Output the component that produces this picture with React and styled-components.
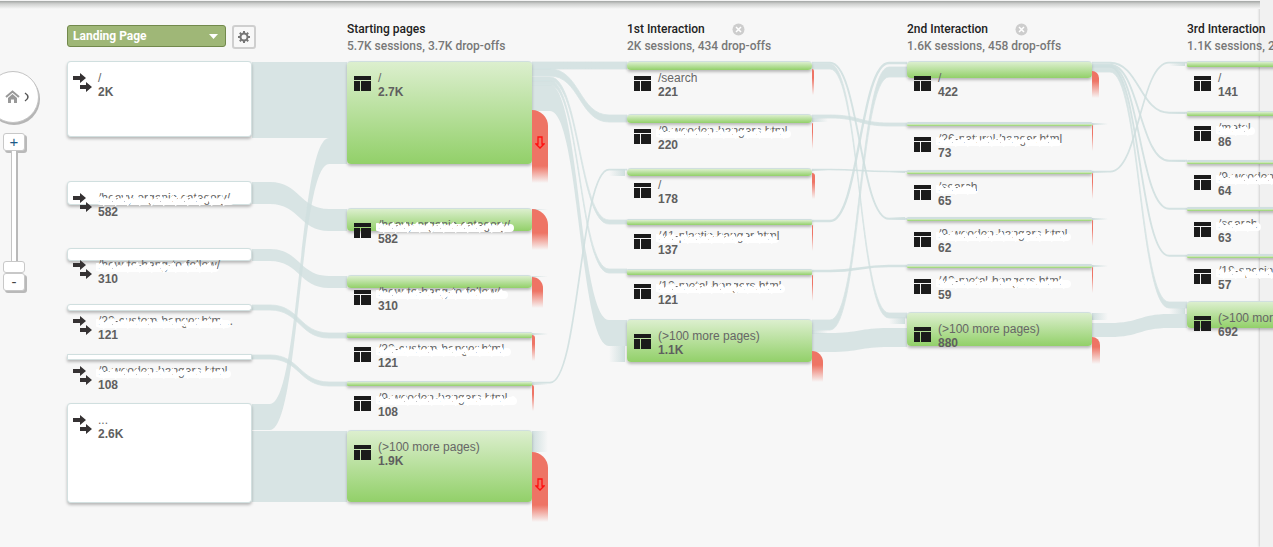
import React from "react";
import styled, { createGlobalStyle } from "styled-components";

const GlobalStyle = createGlobalStyle`
  * {
    box-sizing: border-box;
  }
  body {
    margin: 0;
    background-color: #f7f7f7;
    font-family: Roboto, "Liberation Sans", sans-serif;
    font-size: 12px;
  }
`;

const Page = styled.div`
  position: relative;
  display: flex;
  min-height: 100vh;
  overflow: hidden;
  background-color: #f7f7f7;
`;
const TopShadow = styled.div`
  position: absolute;
  top: 0;
  left: 0;
  right: 13px;
  height: 9px;
  border-top: 1px solid #f4f4f4;
  background: linear-gradient(#a2a5a3, #cfd0cf 35%, #f7f7f7);
`;
const Gutter = styled.div`
  width: 13px;
  background-color: #f1f1f1;
  box-shadow: -1px 0 2px #d0d0d0;
`;

const Rail = styled.div`
  width: 67px;
  padding-top: 71px;
  display: flex;
  flex-direction: column;
  align-items: flex-start;
`;
const HomeButton = styled.button`
  display: flex;
  align-items: center;
  justify-content: flex-end;
  gap: 4px;
  width: 52px;
  height: 52px;
  margin-left: -13px;
  padding: 0 8px 0 0;
  border: 1px solid #c4c4c4;
  border-radius: 50%;
  background-color: white;
  box-shadow: 1px 2px 0 #b5b5b5;
`;
const Zoom = styled.div`
  display: flex;
  flex-direction: column;
  align-items: center;
  width: 22px;
  margin: 10px 0 0 3px;
`;
const ZoomButton = styled.button`
  display: flex;
  align-items: center;
  justify-content: center;
  width: 22px;
  height: 18px;
  padding: 0;
  border: 1px solid #c8c8c8;
  border-radius: 3px;
  background-color: white;
  box-shadow: 2px 2px 0 #b9b9b9;
  color: ${(props) => props.color};
  font-family: "Liberation Sans", Arial, sans-serif;
  font-size: 15px;
  line-height: 16px;
`;
const ZoomRange = styled.input`
  appearance: none;
  writing-mode: vertical-lr;
  direction: rtl;
  width: 22px;
  height: 122px;
  margin: 0;
  background: linear-gradient(
      90deg,
      #c4c4c4 1px,
      white 1px,
      white 5px,
      #b9b9b9 5px
    )
    center / 7px 100% no-repeat;

  &::-webkit-slider-thumb {
    appearance: none;
    width: 22px;
    height: 12px;
    border: 1px solid #c8c8c8;
    border-radius: 3px;
    background-color: white;
  }
`;

const Board = styled.main`
  position: relative;
  z-index: 1;
  flex: 1;
  min-width: 0;
  padding-top: 21px;
`;
const Columns = styled.div`
  display: flex;
  gap: 95px;
`;
const Column = styled.section`
  flex: 0 0 185px;
  min-width: 0;
`;
const Head = styled.header`
  height: 40px;
  white-space: nowrap;
  line-height: 17px;
`;
const TitleRow = styled.div`
  display: flex;
  align-items: center;
  gap: 27px;
`;
const Title = styled.h2`
  margin: 0;
  color: #222;
  font-size: 12px;
  font-weight: 500;
`;
const Sub = styled.p`
  margin: 0;
  color: #777;
  font-weight: 500;
`;
const CloseButton = styled.button`
  display: flex;
  padding: 0;
  border: none;
  background: none;
`;
const Tools = styled.div`
  display: flex;
  align-items: flex-start;
  gap: 6px;
  padding-top: 4px;
`;
const SelectBox = styled.label`
  flex: none;
  display: grid;
  align-items: center;
  width: 159px;

  > * {
    grid-area: 1 / 1;
  }
  svg {
    justify-self: end;
    margin-right: 8px;
    pointer-events: none;
  }
`;
const Select = styled.select`
  appearance: none;
  width: 100%;
  height: 22px;
  padding: 0 5px;
  border: 1px solid #72894c;
  border-radius: 3px;
  background-color: #9fb777;
  color: white;
  font-family: inherit;
  font-size: 12px;
  font-weight: 700;
`;
const GearButton = styled.button`
  flex: none;
  display: flex;
  align-items: center;
  justify-content: center;
  width: 24px;
  height: 24px;
  padding: 0;
  border: 2px solid #cfcfcf;
  border-radius: 3px;
  background-color: #f8f8f8;
`;

const Nodes = styled.div`
  position: relative;
`;
const Node = styled.article`
  position: absolute;
  top: ${(props) => props.$top}px;
  left: 0;
  width: 185px;
`;
const Bar = styled.div`
  height: ${(props) => props.$size}px;
  border: ${(props) => (props.$plain ? "1px solid #d3e0e0" : "none")};
  border-top: ${(props) => (props.$size === 4 ? 2 : 1)}px solid #d0dfdf;
  border-radius: ${(props) => (props.$size < 7 ? 1 : 4)}px;
  background: ${(props) =>
    props.$plain ? "white" : "linear-gradient(#dcefce, #92d069)"};
  box-shadow: 0 2px 3px rgba(0, 0, 0, 0.25);
`;
const Caption = styled.div`
  position: absolute;
  top: 10px;
  left: 6px;
  display: flex;
  gap: 6px;
  color: #666;
  font-family: "Liberation Sans", Arial, sans-serif;
  line-height: 14px;
  white-space: nowrap;

  > svg {
    flex: none;
    margin-top: 2px;
  }
`;
const Count = styled.strong`
  display: block;
  color: #5f5f5f;
`;
const Masked = styled.span`
  position: relative;
  display: block;
  width: ${(props) => props.$width}px;

  svg {
    position: absolute;
    top: 1px;
    left: -2px;
  }
  span {
    position: relative;
  }
`;
const DropOff = styled.div`
  position: absolute;
  top: ${(props) => props.$top}px;
  left: 185px;
  display: flex;
  justify-content: center;
  width: ${(props) => props.$width}px;
  height: ${(props) => props.$height}px;
  padding-top: 26px;
  border-top-right-radius: ${(props) => props.$width}px;
  background: linear-gradient(
    #ee7465 calc(100% - 17px),
    rgba(238, 116, 101, 0)
  );
`;
const Flow = styled.svg`
  position: absolute;
  top: 0;
  left: 0;
`;

// tops and sizes are measured from the top edge of the board
const columns = [
  {
    plain: true,
    nodes: [
      { top: 61, size: 76, label: "/", count: "2K" },
      { top: 181, size: 24, label: "/heavy-organic-category/", count: "582", mask: 136 },
      { top: 248, size: 13, label: "/how-to-hang-to-follow/", count: "310", mask: 120 },
      { top: 304, size: 7, label: "/22-custom-hanger.htm…", count: "121", mask: 134 },
      { top: 354, size: 6, label: "/9-wooden-hangers.html", count: "108", mask: 134 },
      { top: 403, size: 100, label: "...", count: "2.6K" },
    ],
  },
  {
    title: "Starting pages",
    sub: "5.7K sessions, 3.7K drop-offs",
    nodes: [
      { top: 61, size: 103, label: "/", count: "2.7K", drop: [110, 73, 16, true] },
      { top: 208, size: 23, label: "/heavy-organic-category/", count: "582", mask: 136, drop: [209, 41, 16] },
      { top: 275, size: 13, label: "/how-to-hang-to-follow/", count: "310", mask: 130, drop: [277, 31, 11] },
      { top: 332, size: 6, label: "/22-custom-hanger.html", count: "121", mask: 134, drop: [335, 23, 3] },
      { top: 381, size: 5, label: "/9-wooden-hangers.html", count: "108", mask: 140, drop: [385, 21, 2] },
      { top: 430, size: 72, label: "(>100 more pages)", count: "1.9K", drop: [452, 70, 16, true] },
    ],
  },
  {
    title: "1st Interaction",
    sub: "2K sessions, 434 drop-offs",
    closable: true,
    nodes: [
      { top: 61, size: 9, label: "/search", count: "221", drop: [69, 22, 2] },
      { top: 114, size: 9, label: "/9-wooden-hangers.html", count: "220", mask: 134, drop: [123, 21, 1] },
      { top: 168, size: 8, label: "/", count: "178", drop: [173, 22, 3] },
      { top: 219, size: 6, label: "/41-plastic-hanger.html", count: "137", mask: 122, drop: [225, 21, 1] },
      { top: 269, size: 6, label: "/12-metal-hangers.html", count: "121", mask: 128, drop: [275, 21, 1] },
      { top: 319, size: 43, label: "(>100 more pages)", count: "1.1K", drop: [351, 31, 11] },
    ],
  },
  {
    title: "2nd Interaction",
    sub: "1.6K sessions, 458 drop-offs",
    closable: true,
    nodes: [
      { top: 61, size: 17, label: "/", count: "422", drop: [71, 27, 7] },
      { top: 122, size: 4, label: "/26-natural-hanger.html", count: "73", mask: 124, drop: [125, 21, 1] },
      { top: 170, size: 4, label: "/search", count: "65", mask: 40, drop: [173, 21, 1] },
      { top: 217, size: 4, label: "/9-wooden-hangers.html", count: "62", mask: 132, drop: [220, 21, 1] },
      { top: 264, size: 4, label: "/42-metal-hangers.html", count: "59", mask: 132, drop: [267, 21, 1] },
      { top: 312, size: 34, label: "(>100 more pages)", count: "880", drop: [337, 27, 8] },
    ],
  },
  {
    title: "3rd Interaction",
    sub: "1.1K sessions, 267 drop-offs",
    closable: true,
    nodes: [
      { top: 61, size: 6, label: "/", count: "141" },
      { top: 111, size: 5, label: "/metal", count: "86", mask: 36 },
      { top: 160, size: 4, label: "/9-wooden-hangers", count: "64", mask: 110 },
      { top: 207, size: 4, label: "/search", count: "63", mask: 42 },
      { top: 254, size: 4, label: "/18-special-hangers", count: "57", mask: 110 },
      { top: 301, size: 27, label: "(>100 more pages)", count: "692" },
    ],
  },
];

// column, y at the left end, y at the right end, thickness
const links = [
  [0, 62, 62, 76],
  [0, 182, 209, 22],
  [0, 249, 276, 12],
  [0, 305, 333, 5],
  [0, 355, 382, 4],
  [0, 404, 138, 26],
  [0, 431, 431, 71],
  [1, 62, 62, 7],
  [1, 69, 115, 7],
  [1, 77, 220, 4],
  [1, 81, 269, 4],
  [1, 85, 320, 26],
  [1, 382, 169, 1.4],
  [2, 62, 218, 1.6],
  [2, 64, 313, 5],
  [2, 115, 123, 3],
  [2, 169, 171, 1],
  [2, 220, 62, 2],
  [2, 270, 265, 2],
  [2, 320, 67, 10],
  [2, 333, 328, 19],
  [3, 62, 112, 1.5],
  [3, 64, 160, 1.5],
  [3, 65, 208, 1.5],
  [3, 66, 255, 1.5],
  [3, 66, 302, 6],
  [3, 171, 62, 1.4],
  [3, 323, 314, 14],
];

// traffic that fades out beside a node: x, y, height, side
const stubs = [
  [465, 431, 21, "out"],
  [465, 209, 1, "out"],
  [465, 276, 1, "out"],
  [465, 333, 2, "out"],
  [465, 383, 2, "out"],
  [542, 169, 7, "in"],
  [542, 346, 16, "in"],
  [745, 118, 4, "out"],
  [745, 169, 2, "out"],
  [745, 330, 4, "out"],
  [822, 171, 2, "in"],
  [822, 217, 3, "in"],
  [822, 317, 7, "in"],
  [1025, 123, 2, "out"],
  [1025, 171, 2, "out"],
  [1025, 218, 2, "out"],
  [1025, 265, 2, "out"],
  [1025, 313, 7, "out"],
  [1102, 62, 4, "in"],
  [1102, 112, 2, "in"],
  [1102, 160, 2, "in"],
  [1102, 308, 6, "in"],
];

const ribbon = ([col, from, to, size]) => {
  const x = 185 + col * 280;
  const a = x + 18;
  const b = x + 77;
  const mid = (a + b) / 2;
  return `M${x} ${from}H${a}C${mid} ${from} ${mid} ${to} ${b} ${to}H${x + 95}V${
    to + size
  }H${b}C${mid} ${to + size} ${mid} ${from + size} ${a} ${from + size}H${x}Z`;
};

// a ribbon of one or two pixels would vanish where it runs steeply
const thread = ([col, from, to, size]) => {
  const x = 185 + col * 280;
  const y = from + size / 2;
  const end = to + size / 2;
  return `M${x} ${y}H${x + 18}C${x + 47} ${y} ${x + 48} ${end} ${
    x + 77
  } ${end}H${x + 95}`;
};

const Links = () => (
  <Flow width="1206" height="547" aria-hidden="true">
    <defs>
      <linearGradient id="out">
        <stop offset="0" stopColor="#d0dfdf" />
        <stop offset="1" stopColor="#d0dfdf" stopOpacity="0" />
      </linearGradient>
      <linearGradient id="in">
        <stop offset="0" stopColor="#d0dfdf" stopOpacity="0" />
        <stop offset="1" stopColor="#d0dfdf" />
      </linearGradient>
    </defs>
    {links.map((link, i) =>
      link[3] > 2 ? (
        <path
          key={i}
          d={ribbon(link)}
          fill="#cfdfdf"
          stroke="#cfdfdf"
          strokeWidth={link[3] < 11 ? 0.8 : 0}
          opacity="0.8"
        />
      ) : (
        <path
          key={i}
          d={thread(link)}
          fill="none"
          stroke="#cfdfdf"
          strokeWidth={link[3] + 0.3}
          opacity="0.9"
        />
      )
    )}
    {stubs.map(([x, y, height, side], i) => (
      <rect key={i} x={x} y={y} width="16" height={height} fill={`url(#${side})`} />
    ))}
  </Flow>
);

const EntryIcon = () => (
  <svg width="19" height="20" viewBox="0 0 19 20" fill="#353233">
    <path d="M0 3h7V0l6 5-6 5V7H0zM7 12h6V9l6 5-6 5v-3H7z" />
  </svg>
);
const PageIcon = () => (
  <svg width="19" height="20" viewBox="0 0 19 20" fill="#1b1b1b">
    <path d="M1 3h17v4H1zM1 8h6v10H1zM8 8h10v10H8z" />
  </svg>
);
const HomeIcon = () => (
  <svg width="15" height="14" viewBox="0 0 15 14" fill="none">
    <path d="M1 7l6.500-5.500L14 7" stroke="#999" strokeWidth="2" />
    <path d="M3 8l4.500-4L12 8v5H9V9.500H6V13H3z" fill="#999" />
  </svg>
);
const GearIcon = () => (
  <svg width="14" height="14" viewBox="0 0 14 14" fill="none" stroke="#757575">
    <circle cx="7" cy="7" r="3.500" strokeWidth="2" />
    <path
      d="M7 1v2M7 11v2M1 7h2M11 7h2M2.800 2.800l1.400 1.400M9.800 9.800l1.400 1.400M2.800 11.200l1.400-1.400M9.800 4.200l1.400-1.400"
      strokeWidth="2"
    />
  </svg>
);
const CloseIcon = () => (
  <svg width="13" height="13" viewBox="0 0 13 13">
    <circle cx="6.500" cy="6.500" r="6" fill="#cdcdcd" />
    <path d="M4 4l5 5M9 4l-5 5" stroke="white" strokeWidth="1.500" />
  </svg>
);
const DropIcon = () => (
  <svg width="10" height="13" viewBox="0 0 10 13" fill="none">
    <path d="M3 1h4v7h2l-4 4-4-4h2z" stroke="#ff1010" strokeWidth="1.300" />
  </svg>
);

const MaskedLabel = ({ width, children }) => {
  let back = "M2 8";
  let front = "M2 8";
  for (let x = 5; x < width; x += 3) {
    back += `L${x} ${7 + ((x * 7) % 3)}`;
    front += `L${x} ${x % 2 ? 5 + ((x * 5) % 4) : 11 - ((x * 3) % 4)}`;
  }
  return (
    <Masked $width={width}>
      <svg width={width + 4} height="15" fill="none" stroke="white">
        <path d={back} strokeWidth="8" strokeLinecap="round" />
      </svg>
      <span>{children}</span>
      <svg width={width + 4} height="15" fill="none" stroke="white">
        <path d={front} strokeWidth="4" strokeLinecap="round" />
      </svg>
    </Masked>
  );
};

const FlowNode = ({ node, plain }) => {
  const { top, size, label, count, mask, drop } = node;
  return (
    <Node $top={top - 61}>
      <Bar $size={size} $plain={plain} />
      {drop && (
        <DropOff $top={drop[0] - top} $height={drop[1]} $width={drop[2]}>
          {drop[3] && <DropIcon />}
        </DropOff>
      )}
      <Caption>
        {plain ? <EntryIcon /> : <PageIcon />}
        <div>
          {mask ? <MaskedLabel width={mask}>{label}</MaskedLabel> : label}
          <Count>{count}</Count>
        </div>
      </Caption>
    </Node>
  );
};

const App = () => {
  return (
    <Page>
      <GlobalStyle />
      <TopShadow />
      <Rail>
        <HomeButton aria-label="Home">
          <HomeIcon />
          <svg width="6" height="10" viewBox="0 0 6 10" fill="none">
            <path d="M1 1q3 2 3 4t-3 4" stroke="#555" strokeWidth="1.500" />
          </svg>
        </HomeButton>
        <Zoom>
          <ZoomButton color="#1c5a88">+</ZoomButton>
          <ZoomRange type="range" min="0" max="10" defaultValue="0" aria-label="Zoom" />
          <ZoomButton color="#444">-</ZoomButton>
        </Zoom>
      </Rail>
      <Board>
        <Links />
        <Columns>
          {columns.map((column, i) => (
            <Column key={i}>
              <Head>
                {column.title ? (
                  <>
                    <TitleRow>
                      <Title>{column.title}</Title>
                      {column.closable && (
                        <CloseButton aria-label="Remove step">
                          <CloseIcon />
                        </CloseButton>
                      )}
                    </TitleRow>
                    <Sub>{column.sub}</Sub>
                  </>
                ) : (
                  <Tools>
                    <SelectBox>
                      <Select aria-label="Dimension">
                        <option>Landing Page</option>
                      </Select>
                      <svg width="9" height="5" viewBox="0 0 9 5">
                        <path d="M0 0h9L4.500 5z" fill="white" />
                      </svg>
                    </SelectBox>
                    <GearButton aria-label="Settings">
                      <GearIcon />
                    </GearButton>
                  </Tools>
                )}
              </Head>
              <Nodes>
                {column.nodes.map((node) => (
                  <FlowNode key={node.top} node={node} plain={column.plain} />
                ))}
              </Nodes>
            </Column>
          ))}
        </Columns>
      </Board>
      <Gutter />
    </Page>
  );
};

export default App;
